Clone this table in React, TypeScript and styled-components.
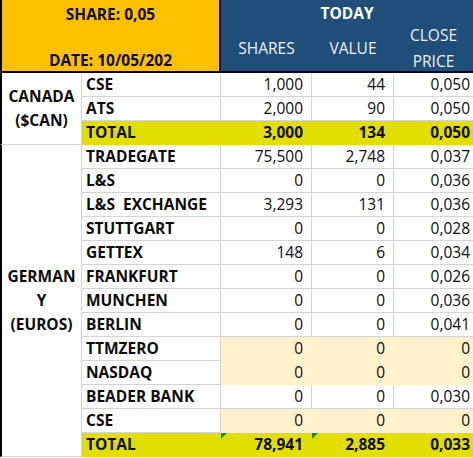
import styled, { createGlobalStyle } from 'styled-components';

const GlobalStyle = createGlobalStyle`
  body {
    margin: 0;
    background: #fff;
    overflow: hidden;
  }
`;

type Tone = 'plain' | 'peach' | 'total';

type Row = {
  name: string;
  shares: string;
  value: string;
  price: string;
  tone?: Tone;
  flag?: boolean;
};

const canada: Row[] = [
  { name: 'CSE', shares: '1,000', value: '44', price: '0,050' },
  { name: 'ATS', shares: '2,000', value: '90', price: '0,050' },
  { name: 'TOTAL', shares: '3,000', value: '134', price: '0,050', tone: 'total' },
];

const germany: Row[] = [
  { name: 'TRADEGATE', shares: '75,500', value: '2,748', price: '0,037' },
  { name: 'L&S', shares: '0', value: '0', price: '0,036' },
  { name: 'L&S  EXCHANGE', shares: '3,293', value: '131', price: '0,036' },
  { name: 'STUTTGART', shares: '0', value: '0', price: '0,028' },
  { name: 'GETTEX', shares: '148', value: '6', price: '0,034' },
  { name: 'FRANKFURT', shares: '0', value: '0', price: '0,026' },
  { name: 'MUNCHEN', shares: '0', value: '0', price: '0,036' },
  { name: 'BERLIN', shares: '0', value: '0', price: '0,041' },
  { name: 'TTMZERO', shares: '0', value: '0', price: '0', tone: 'peach' },
  { name: 'NASDAQ', shares: '0', value: '0', price: '0', tone: 'peach' },
  { name: 'BEADER BANK', shares: '0', value: '0', price: '0,030' },
  { name: 'CSE', shares: '0', value: '0', price: '0', tone: 'peach' },
  { name: 'TOTAL', shares: '78,941', value: '2,885', price: '0,033', tone: 'total', flag: true },
];

const fills: Record<Tone, string> = {
  plain: '#ffffff',
  peach: '#fff2cc',
  total: '#e2de00',
};

const Sheet = styled.div`
  display: grid;
  grid-template-columns: 82px 139px 91px 82px 79px;
  grid-template-rows: 27px 46px repeat(16, 24px);
  width: 473px;
  font-family: 'Open Sans', 'Liberation Sans', sans-serif;
  font-size: 15.5px;
  color: #0d0d0d;
`;

const TitleCell = styled.div`
  grid-column: 1 / span 2;
  grid-row: 1 / span 2;
  background: #ffc000;
  border-left: 2px solid #000;
  border-right: 2px solid #000;
  border-bottom: 2px solid #000;
  display: flex;
  flex-direction: column;
  justify-content: space-between;
  align-items: center;
  padding: 3px 0 0;
  font-weight: 700;
  line-height: 22px;
`;

const TodayCell = styled.div`
  grid-column: 3 / span 3;
  grid-row: 1;
  background: #1f4e78;
  color: #fff;
  font-weight: 700;
  text-align: center;
  line-height: 27px;
`;

const ColumnHead = styled.div`
  grid-row: 2;
  background: #1f4e78;
  color: #eef2f6;
  border-bottom: 2px solid #000;
  display: flex;
  align-items: center;
  justify-content: center;
  text-align: center;
  line-height: 26px;
  padding-bottom: 3px;
`;

const RegionCell = styled.div<{ $rows: number }>`
  grid-column: 1;
  grid-row: span ${p => p.$rows};
  border-left: 2px solid #000;
  border-right: 1px solid #d4d4d4;
  border-bottom: 1px solid #d4d4d4;
  display: flex;
  align-items: center;
  justify-content: center;
  text-align: center;
  font-weight: 700;
  line-height: 24px;
  padding-bottom: 1px;
`;

const Cell = styled.div<{ $tone: Tone }>`
  position: relative;
  background: ${p => fills[p.$tone]};
  border-right: 1px solid ${p => (p.$tone === 'plain' ? '#d4d4d4' : 'transparent')};
  border-bottom: 1px solid ${p => (p.$tone === 'plain' ? '#d4d4d4' : 'transparent')};
  line-height: 23px;
  white-space: pre;
  overflow: hidden;
`;

const ExchangeCell = styled(Cell)`
  grid-column: 2;
  padding-left: 4px;
  font-weight: 700;
  border-right-color: ${p => (p.$tone === 'total' ? 'transparent' : '#d4d4d4')};
  border-bottom-color: ${p => (p.$tone === 'total' ? 'transparent' : '#d4d4d4')};
  background: ${p => (p.$tone === 'total' ? fills.total : '#fff')};
`;

const NumCell = styled(Cell)<{ $edge?: boolean; $flag?: boolean }>`
  text-align: right;
  padding-right: ${p => (p.$edge ? '3px' : '8px')};
  font-weight: ${p => (p.$tone === 'total' ? 700 : 400)};
  ${p => p.$edge && 'border-right: none;'}

  &::before {
    content: '';
    display: ${p => (p.$flag ? 'block' : 'none')};
    position: absolute;
    left: 0;
    top: 0;
    border-top: 6px solid #1a8a1a;
    border-right: 6px solid transparent;
  }
`;

function DataRow({ row }: { row: Row }) {
  const tone = row.tone ?? 'plain';
  return (
    <>
      <ExchangeCell $tone={tone}>{row.name}</ExchangeCell>
      <NumCell $tone={tone} $flag={row.flag}>{row.shares}</NumCell>
      <NumCell $tone={tone} $flag={row.flag}>{row.value}</NumCell>
      <NumCell $tone={tone} $edge>{row.price}</NumCell>
    </>
  );
}

export default function App() {
  return (
    <>
      <GlobalStyle />
      <Sheet>
        <TitleCell>
          <div>SHARE: 0,05</div>
          <div>DATE: 10/05/202</div>
        </TitleCell>
        <TodayCell>TODAY</TodayCell>
        <ColumnHead>SHARES</ColumnHead>
        <ColumnHead>VALUE</ColumnHead>
        <ColumnHead>
          CLOSE
          <br />
          PRICE
        </ColumnHead>

        <RegionCell $rows={canada.length}>
          CANADA
          <br />
          ($CAN)
        </RegionCell>
        {canada.map((row, i) => (
          <DataRow key={`ca-${i}`} row={row} />
        ))}

        <RegionCell $rows={germany.length}>
          GERMAN
          <br />
          Y
          <br />
          (EUROS)
        </RegionCell>
        {germany.map((row, i) => (
          <DataRow key={`de-${i}`} row={row} />
        ))}
      </Sheet>
    </>
  );
}
